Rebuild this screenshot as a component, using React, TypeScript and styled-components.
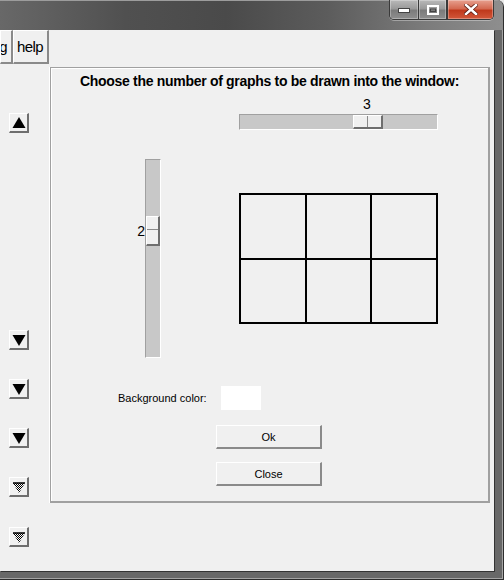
import React from 'react';
import styled, { createGlobalStyle } from 'styled-components';

const GlobalStyle = createGlobalStyle`
  html, body {
    margin: 0;
    padding: 0;
    background: #e8e8e8;
  }
  body {
    font-family: "Liberation Sans", Arial, sans-serif;
    overflow: hidden;
  }
`;

const Frame = styled.div`
  width: 504px;
  height: 580px;
  box-sizing: border-box;
  display: flex;
  flex-direction: column;
  background: #686868;
  border-right: 1px solid #2e2e2e;
  border-bottom: 1px solid #2e2e2e;
  border-top-right-radius: 7px;
  box-shadow: inset -1px -1px 0 #a4a4a4;
  overflow: hidden;
`;

const TitleBar = styled.div`
  height: 30px;
  flex-shrink: 0;
  box-sizing: border-box;
  display: flex;
  justify-content: flex-end;
  align-items: flex-start;
  padding-right: 9px;
  border-top: 1px solid #9c9c9c;
  background: linear-gradient(90deg, #686868 0%, #505050 25%, #4a4a4a 45%, #5c5c5c 65%, #7c7c7c 85%, #8e8e8e 100%);
`;

const Controls = styled.div`
  display: flex;
  height: 19px;
  margin-top: -1px;
  border: 1px solid #3a3a3a;
  border-top: none;
  border-radius: 0 0 5px 5px;
  overflow: hidden;
  box-shadow: 0 1px 0 rgba(255, 255, 255, 0.35);
`;

const ControlButton = styled.div<{ $w: number; $close?: boolean }>`
  width: ${(p) => p.$w}px;
  height: 100%;
  display: flex;
  align-items: center;
  justify-content: center;
  border-left: ${(p) => (p.$close ? '1px solid #3a3a3a' : 'none')};
  border-right: ${(p) => (p.$close ? 'none' : '1px solid #3a3a3a')};
  background: ${(p) =>
    p.$close
      ? 'linear-gradient(180deg, #e7a08f 0%, #d46a52 45%, #c0391c 55%, #d2583a 100%)'
      : 'linear-gradient(180deg, #b9b9b9 0%, #9a9a9a 45%, #7b7b7b 55%, #8e8e8e 100%)'};
  box-shadow: inset 0 0 0 1px rgba(255, 255, 255, 0.3);

  &:last-child {
    border-right: none;
  }
`;

const Body = styled.div`
  flex: 1;
  display: flex;
  flex-direction: column;
  margin: 0 9px 8px 0;
  background: #f0f0f0;
  box-shadow: 1px 1px 0 #333;
`;

const MenuRow = styled.div`
  height: 35px;
  flex-shrink: 0;
  display: flex;
  align-items: flex-start;
`;

const MenuButton = styled.div<{ $w: number }>`
  width: ${(p) => p.$w}px;
  height: 34px;
  box-sizing: border-box;
  display: flex;
  align-items: center;
  justify-content: flex-end;
  padding-right: 4px;
  overflow: hidden;
  background: #f0f0f0;
  border-top: 1px solid #fff;
  border-left: 1px solid #fff;
  border-right: 2px solid #8a8a8a;
  border-bottom: 2px solid #8a8a8a;
  font-size: 15px;
  letter-spacing: -0.6px;
  color: #000;
`;

const Content = styled.div`
  flex: 1;
  display: flex;
  align-items: flex-start;
`;

const LeftColumn = styled.div`
  width: 50px;
  flex-shrink: 0;
  box-sizing: border-box;
  display: flex;
  flex-direction: column;
  gap: 29px;
  padding: 48px 0 0 9px;
`;

const ArrowButton = styled.div<{ $gapAbove?: number }>`
  width: 20px;
  height: 20px;
  box-sizing: border-box;
  margin-top: ${(p) => p.$gapAbove ?? 0}px;
  background: #f0f0f0;
  border-top: 1px solid #fff;
  border-left: 1px solid #fff;
  border-right: 2px solid #6e6e6e;
  border-bottom: 2px solid #6e6e6e;
  display: flex;

  svg {
    display: block;
  }
`;

const Panel = styled.div`
  margin-top: 2px;
  width: 440px;
  height: 436px;
  box-sizing: border-box;
  display: flex;
  flex-direction: column;
  align-items: flex-start;
  border: 1px solid #a0a0a0;
  border-right-width: 2px;
  border-bottom-width: 2px;
  box-shadow: inset 1px 1px 0 #fff, -1px 0 0 #fff;
`;

const Heading = styled.div`
  align-self: stretch;
  margin-top: 3px;
  line-height: 20px;
  text-align: center;
  font-size: 14px;
  font-weight: bold;
  letter-spacing: -0.3px;
  color: #000;
`;

const HSliderBlock = styled.div`
  margin: 5px 0 0 188px;
  width: 199px;
`;

const ValueRow = styled.div`
  position: relative;
  height: 16px;
  margin-bottom: 2px;
`;

const ValueText = styled.span`
  position: absolute;
  top: 0;
  line-height: 16px;
  font-size: 14px;
  color: #000;
  transform: translateX(-50%);
`;

const Track = styled.div<{ $vertical?: boolean }>`
  position: relative;
  box-sizing: border-box;
  width: ${(p) => (p.$vertical ? '16px' : '199px')};
  height: ${(p) => (p.$vertical ? '199px' : '16px')};
  background: #c8c8c8;
  border-top: 1px solid #a0a0a0;
  border-left: 1px solid #a0a0a0;
  border-right: 1px solid #fff;
  border-bottom: 1px solid #fff;
`;

const Thumb = styled.div<{ $vertical?: boolean }>`
  position: absolute;
  box-sizing: border-box;
  width: ${(p) => (p.$vertical ? '14px' : '30px')};
  height: ${(p) => (p.$vertical ? '30px' : '14px')};
  ${(p) => (p.$vertical ? 'left: 0;' : 'top: 0;')}
  background: #f0f0f0;
  border-top: 1px solid #fff;
  border-left: 1px solid #fff;
  border-right: 2px solid #6e6e6e;
  border-bottom: 2px solid #6e6e6e;

  &::after {
    content: '';
    position: absolute;
    background: #8a8a8a;
    ${(p) =>
      p.$vertical
        ? 'left: 0; right: 0; top: 12px; height: 1px;'
        : 'top: 0; bottom: 0; left: 13px; width: 1px;'}
  }
`;

const ThumbLabel = styled.span`
  position: absolute;
  right: 100%;
  top: 50%;
  margin-right: 2px;
  transform: translateY(-50%);
  font-size: 14px;
  line-height: 16px;
  color: #000;
`;

const MiddleRow = styled.div`
  margin-top: 29px;
  display: flex;
  align-items: flex-start;
`;

const VSliderBox = styled.div`
  margin-left: 94px;
`;

const GraphGrid = styled.div<{ $cols: number; $rows: number }>`
  margin: 34px 0 0 78px;
  width: 199px;
  height: 131px;
  box-sizing: border-box;
  display: grid;
  grid-template-columns: repeat(${(p) => p.$cols}, 1fr);
  grid-template-rows: repeat(${(p) => p.$rows}, 1fr);
  gap: 2px;
  padding: 2px;
  background: #000;
`;

const GraphCell = styled.div`
  background: #f0f0f0;
`;

const ColorRow = styled.div`
  margin: 28px 0 0 67px;
  height: 24px;
  display: flex;
  align-items: center;
  gap: 14px;
`;

const SmallLabel = styled.span`
  font-size: 11px;
  color: #000;
`;

const Swatch = styled.div<{ $color: string }>`
  width: 40px;
  height: 24px;
  background: ${(p) => p.$color};
`;

const DialogButton = styled.div<{ $gapAbove: number }>`
  margin: ${(p) => p.$gapAbove}px 0 0 165px;
  width: 106px;
  height: 24px;
  box-sizing: border-box;
  display: flex;
  align-items: center;
  justify-content: center;
  background: #f0f0f0;
  border-top: 1px solid #fff;
  border-left: 1px solid #fff;
  border-right: 2px solid #8a8a8a;
  border-bottom: 2px solid #8a8a8a;
  font-size: 11px;
  color: #000;
`;

const MIN = 1;
const MAX = 4;
const TRAVEL = 199 - 30;

const offsetFor = (v: number) => Math.round(((v - MIN) / (MAX - MIN)) * TRAVEL);

type ArrowKind = 'up' | 'down' | 'dim';

const Arrow: React.FC<{ kind: ArrowKind }> = ({ kind }) => {
  if (kind === 'up') {
    return (
      <svg width="17" height="17" viewBox="0 0 17 17">
        <polygon points="2.5,14 15.5,14 9,3" fill="#000" />
      </svg>
    );
  }
  if (kind === 'down') {
    return (
      <svg width="17" height="17" viewBox="0 0 17 17">
        <polygon points="2.5,4 15.5,4 9,15" fill="#000" />
      </svg>
    );
  }
  return (
    <svg width="17" height="17" viewBox="0 0 17 17">
      <defs>
        <pattern id="dither" width="2" height="2" patternUnits="userSpaceOnUse">
          <rect width="2" height="2" fill="#fff" />
          <rect width="1" height="1" fill="#000" />
          <rect x="1" y="1" width="1" height="1" fill="#000" />
        </pattern>
      </defs>
      <polygon points="3,5 15,5 9,15" fill="url(#dither)" />
      <polygon points="3,5 15,5" stroke="#000" strokeWidth="1" />
    </svg>
  );
};

const App: React.FC = () => {
  const columns = 3;
  const rows = 2;
  const cells = Array.from({ length: columns * rows });
  const hOffset = offsetFor(columns);
  const vOffset = offsetFor(rows);

  return (
    <Frame>
      <GlobalStyle />
      <TitleBar>
        <Controls>
          <ControlButton $w={28}>
            <svg width="12" height="6" viewBox="0 0 12 6">
              <rect x="0.5" y="1.5" width="11" height="4" fill="#fff" stroke="#444" strokeWidth="1" />
            </svg>
          </ControlButton>
          <ControlButton $w={27}>
            <svg width="12" height="10" viewBox="0 0 12 10">
              <rect x="1" y="1" width="10" height="8" fill="none" stroke="#fff" strokeWidth="2" />
              <rect x="3.5" y="4" width="5" height="2.5" fill="none" stroke="#444" strokeWidth="1" />
            </svg>
          </ControlButton>
          <ControlButton $w={45} $close>
            <svg width="14" height="11" viewBox="0 0 14 11">
              <path d="M2 1 L12 10 M12 1 L2 10" stroke="#5a1a10" strokeWidth="4" strokeLinecap="square" />
              <path d="M2 1 L12 10 M12 1 L2 10" stroke="#fff" strokeWidth="2.5" strokeLinecap="square" />
            </svg>
          </ControlButton>
        </Controls>
      </TitleBar>

      <Body>
        <MenuRow>
          <MenuButton $w={13}>g</MenuButton>
          <MenuButton $w={36}>help</MenuButton>
        </MenuRow>

        <Content>
          <LeftColumn>
            <ArrowButton>
              <Arrow kind="up" />
            </ArrowButton>
            <ArrowButton $gapAbove={168}>
              <Arrow kind="down" />
            </ArrowButton>
            <ArrowButton>
              <Arrow kind="down" />
            </ArrowButton>
            <ArrowButton>
              <Arrow kind="down" />
            </ArrowButton>
            <ArrowButton>
              <Arrow kind="dim" />
            </ArrowButton>
            <ArrowButton $gapAbove={1}>
              <Arrow kind="dim" />
            </ArrowButton>
          </LeftColumn>

          <Panel>
            <Heading>Choose the number of graphs to be drawn into the window:</Heading>

            <HSliderBlock>
              <ValueRow>
                <ValueText style={{ left: hOffset + 15 }}>{columns}</ValueText>
              </ValueRow>
              <Track>
                <Thumb style={{ left: hOffset }} />
              </Track>
            </HSliderBlock>

            <MiddleRow>
              <VSliderBox>
                <Track $vertical>
                  <Thumb $vertical style={{ top: vOffset }}>
                    <ThumbLabel>{rows}</ThumbLabel>
                  </Thumb>
                </Track>
              </VSliderBox>
              <GraphGrid $cols={columns} $rows={rows}>
                {cells.map((_, i) => (
                  <GraphCell key={i} />
                ))}
              </GraphGrid>
            </MiddleRow>

            <ColorRow>
              <SmallLabel>Background color:</SmallLabel>
              <Swatch $color="#ffffff" />
            </ColorRow>

            <DialogButton $gapAbove={15}>Ok</DialogButton>
            <DialogButton $gapAbove={13}>Close</DialogButton>
          </Panel>
        </Content>
      </Body>
    </Frame>
  );
};

export default App;
